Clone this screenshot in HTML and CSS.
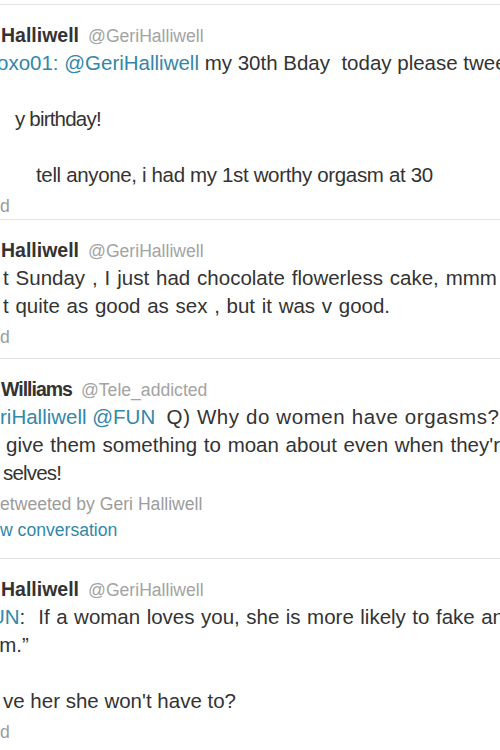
FILE: index.html
```html
<!DOCTYPE html>
<html lang="en">
<head>
<meta charset="utf-8">
<title>Tweets</title>
<link rel="stylesheet" href="styles.css">
</head>
<body>
<main class="timeline">
  <article class="tweet tweet-a">
    <div class="head"><span class="name">Halliwell</span><span class="handle">@GeriHalliwell</span></div>
    <div class="text">
      <div class="line in-n3"><span class="link">oxo01: @GeriHalliwell</span> my 30th Bday  today please tweet me</div>
      <div class="line"></div>
      <div class="line in-15 tight-08">y birthday!</div>
      <div class="line"></div>
      <div class="line in-36 tight-035">tell anyone, i had my 1st worthy orgasm at 30</div>
    </div>
    <div class="meta">d</div>
  </article>

  <article class="tweet tweet-b">
    <div class="head"><span class="name">Halliwell</span><span class="handle">@GeriHalliwell</span></div>
    <div class="text">
      <div class="line in-3 ws-12">t Sunday , I just had chocolate flowerless cake, mmm</div>
      <div class="line in-3 ws-1">t quite as good as sex , but it was v good.</div>
    </div>
    <div class="meta">d</div>
  </article>

  <article class="tweet tweet-c">
    <div class="head"><span class="name name-narrow">Williams</span><span class="handle">@Tele_addicted</span></div>
    <div class="text">
      <div class="line"><span class="link">riHalliwell @FUN</span>  <span class="wide-06">Q) Why do women have orgasms? To</span></div>
      <div class="line in-6 ws-1">give them something to moan about even when they're</div>
      <div class="line in-3 tight-08">selves!</div>
    </div>
    <div class="meta">etweeted by Geri Halliwell</div>
    <div class="meta"><span class="link">w conversation</span></div>
  </article>

  <article class="tweet tweet-d">
    <div class="head"><span class="name">Halliwell</span><span class="handle">@GeriHalliwell</span></div>
    <div class="text">
      <div class="line in-n10 ws-08"><span class="link">UN</span>:  If a woman loves you, she is more likely to fake an</div>
      <div class="line in-n11">sm.”</div>
      <div class="line"></div>
      <div class="line in-3">ve her she won't have to?</div>
    </div>
    <div class="meta">d</div>
  </article>
</main>
</body>
</html>
```

FILE: styles.css
```css
html, body {
  margin: 0;
  padding: 0;
  background: #ffffff;
}

body {
  width: 500px;
  height: 750px;
  overflow: hidden;
  font-family: "Liberation Sans", Arial, sans-serif;
  color: #333333;
}

.timeline {
  padding-top: 4px;
}

.tweet {
  border-top: 1px solid #e3e3e3;
  padding-top: 16px;
  overflow: hidden;
}

.tweet-a { padding-bottom: 0; }
.tweet-b { padding-bottom: 8px; }
.tweet-c { padding-bottom: 15px; }
.tweet-d { padding-bottom: 4px; }

.head {
  height: 28px;
  line-height: 28px;
  white-space: nowrap;
  text-indent: 1px;
}

.name {
  font-weight: bold;
  font-size: 19.5px;
  color: #333333;
}

.name-narrow {
  letter-spacing: -1px;
}

.handle {
  font-size: 17.6px;
  color: #a3a3a3;
  margin-left: 9px;
}

.text {
  font-size: 20.5px;
}

.line {
  height: 28px;
  line-height: 28px;
  white-space: pre;
}

.in-3 { text-indent: 3px; }
.in-6 { text-indent: 6px; }
.in-15 { text-indent: 15px; }
.in-36 { text-indent: 36px; }
.in-n3 { text-indent: -3px; }
.in-n10 { text-indent: -10px; }
.in-n11 { text-indent: -11px; }

.tight-08 { letter-spacing: -0.8px; }
.tight-035 { letter-spacing: -0.35px; }
.wide-06 { letter-spacing: 0.6px; }
.ws-12 { word-spacing: 1.2px; }
.ws-1 { word-spacing: 1px; }
.ws-08 { word-spacing: 0.8px; }

.link {
  color: #3287aa;
}

.meta {
  font-size: 17.6px;
  line-height: 26px;
  height: 26px;
  color: #9c9c9c;
  white-space: nowrap;
}

.text + .meta {
  margin-top: 4px;
}
```
